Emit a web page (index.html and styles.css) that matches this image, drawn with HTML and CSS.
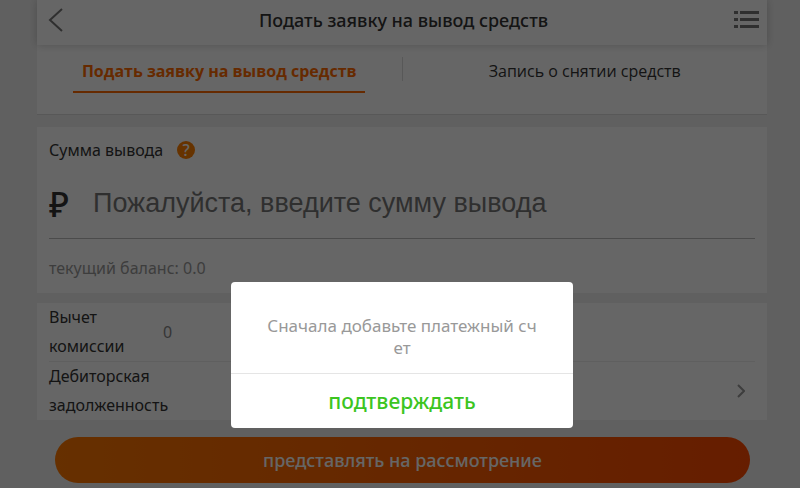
FILE: index.html
```html
<!DOCTYPE html>
<html lang="ru">
<head>
    <meta charset="UTF-8">
    <meta name="viewport" content="width=device-width, initial-scale=1.0">
    <title>Подать заявку на вывод средств</title>
    <link rel="stylesheet" href="styles.css">
</head>
<body>
    <div class="page">
        <header class="header">
            <button class="icon-btn" type="button" aria-label="Назад">
                <svg width="16" height="26" viewBox="0 0 16 26"><path d="M14 2 L2 13 L14 24" fill="none" stroke="#777" stroke-width="2"/></svg>
            </button>
            <h1>Подать заявку на вывод средств</h1>
            <button class="icon-btn" type="button" aria-label="Меню">
                <svg width="26" height="20" viewBox="0 0 26 20" fill="#777">
                    <rect x="1" y="1" width="4" height="3"/><rect x="7" y="1" width="19" height="3"/>
                    <rect x="1" y="8" width="4" height="3"/><rect x="7" y="8" width="19" height="3"/>
                    <rect x="1" y="15" width="4" height="3"/><rect x="7" y="15" width="19" height="3"/>
                </svg>
            </button>
        </header>
        <nav class="tabs">
            <a class="tab active" href="#apply"><span>Подать заявку на вывод средств</span></a>
            <a class="tab" href="#records"><span>Запись о снятии средств</span></a>
        </nav>
        <form class="form">
            <section class="card amount">
                <div class="amount-title">
                    <label for="amount">Сумма вывода</label>
                    <button class="help" type="button" aria-label="Справка">?</button>
                </div>
                <div class="amount-row">
                    <span class="ruble">₽</span>
                    <input id="amount" type="text" placeholder="Пожалуйста, введите сумму вывода">
                </div>
                <p class="balance">текущий баланс: 0.0</p>
            </section>
            <section class="card rows">
                <div class="row">
                    <span class="row-label">Вычет комиссии</span>
                    <span class="row-value">0</span>
                </div>
                <a class="row" href="#account">
                    <span class="row-label">Дебиторская задолженность</span>
                    <svg class="arrow" width="8" height="14" viewBox="0 0 8 14"><path d="M1 1 L7 7 L1 13" fill="none" stroke="#999" stroke-width="2"/></svg>
                </a>
            </section>
            <button class="submit" type="submit">представлять на рассмотрение</button>
        </form>
    </div>
    <div class="overlay">
        <div class="dialog" role="alertdialog" aria-modal="true" aria-describedby="message">
            <p id="message" class="message">Сначала добавьте платежный счет</p>
            <button class="confirm" type="button">подтверждать</button>
        </div>
    </div>
</body>
</html>
```
FILE: styles.css
```css
* {
    box-sizing: border-box;
}
body {
    margin: 0;
    background: #f0f0f0;
    color: #333;
    font-family: "Noto Sans", "Open Sans", sans-serif;
    font-size: 16px;
}
a {
    color: inherit;
    text-decoration: none;
}
button {
    border: 0;
    padding: 0;
    background: none;
    font-family: inherit;
    cursor: pointer;
}
.page {
    padding: 0 33px 0 37px;
}
.header {
    position: relative;
    display: flex;
    align-items: center;
    justify-content: space-between;
    height: 45px;
    padding: 0 8px 6px 11px;
    background: #fff;
    box-shadow: 0 0 8px rgba(0, 0, 0, 0.2);
}
.header h1 {
    margin: 0;
    font-size: 18px;
    font-weight: 500;
}
.icon-btn {
    display: flex;
    width: 26px;
}
.tabs {
    display: flex;
    height: 70px;
    padding-top: 12px;
    background: #fff;
    border-bottom: 1px solid #ddd;
}
.tab {
    flex: 1;
    display: flex;
    justify-content: center;
    height: 24px;
    font-family: "Open Sans", "Noto Sans", sans-serif;
    line-height: 28px;
    white-space: nowrap;
}
.tab + .tab {
    border-left: 1px solid #ddd;
}
.tab span {
    width: 80%;
    height: 36px;
    text-align: center;
}
.tab.active span {
    color: #ff6a00;
    font-weight: 700;
    border-bottom: 2px solid #ff6a00;
}
.card {
    margin-top: 12px;
    padding: 0 12px;
    background: #fff;
}
.amount-title {
    display: flex;
    align-items: center;
    gap: 14px;
    height: 46px;
}
.help {
    width: 18px;
    height: 18px;
    border-radius: 50%;
    background: #ff8000;
    color: #fff;
    font-size: 16px;
    font-weight: 500;
    line-height: 18px;
}
.amount-row {
    display: flex;
    align-items: center;
    height: 66px;
    padding-bottom: 4px;
    border-bottom: 1px solid #bbb;
}
.ruble {
    width: 44px;
    font-size: 34px;
    font-weight: 500;
    line-height: 40px;
}
.amount-row input {
    flex: 1;
    min-width: 0;
    padding: 0;
    border: 0;
    outline: 0;
    background: none;
    font-family: "Liberation Sans", Arial, sans-serif;
    font-size: 27px;
}
.amount-row input::placeholder {
    color: #777;
}
.balance {
    margin: 0;
    padding-top: 4px;
    color: #999;
    line-height: 50px;
}
.rows {
    margin-top: 10px;
}
.row {
    display: flex;
    align-items: center;
    line-height: 29px;
}
.row + .row {
    border-top: 1px solid #eee;
}
.row-label {
    width: 114px;
}
.row-value {
    color: #888;
}
.arrow {
    margin-left: auto;
    margin-right: 10px;
}
.submit {
    display: block;
    width: calc(100% - 35px);
    height: 46px;
    margin: 17px 17px 0 18px;
    border-radius: 23px;
    background: linear-gradient(90deg, #ff7800, #ff6600 40%, #ff4a00);
    color: #fff;
    font-size: 18px;
    font-weight: 500;
}
.overlay {
    position: fixed;
    inset: 0;
    display: flex;
    justify-content: center;
    align-items: flex-end;
    padding: 0 0 60px 4px;
    background: rgba(0, 0, 0, 0.6);
}
.dialog {
    width: 342px;
    border-radius: 4px;
    background: #fff;
    text-align: center;
}
.message {
    margin: 0;
    padding: 33px 32px 14px;
    color: #999;
    font-size: 17px;
    line-height: 22px;
    word-break: break-all;
}
.confirm {
    width: 100%;
    height: 55px;
    border-top: 1px solid #e5e5e5;
    color: #3cc51f;
    font-size: 21px;
    font-weight: 500;
}
```
